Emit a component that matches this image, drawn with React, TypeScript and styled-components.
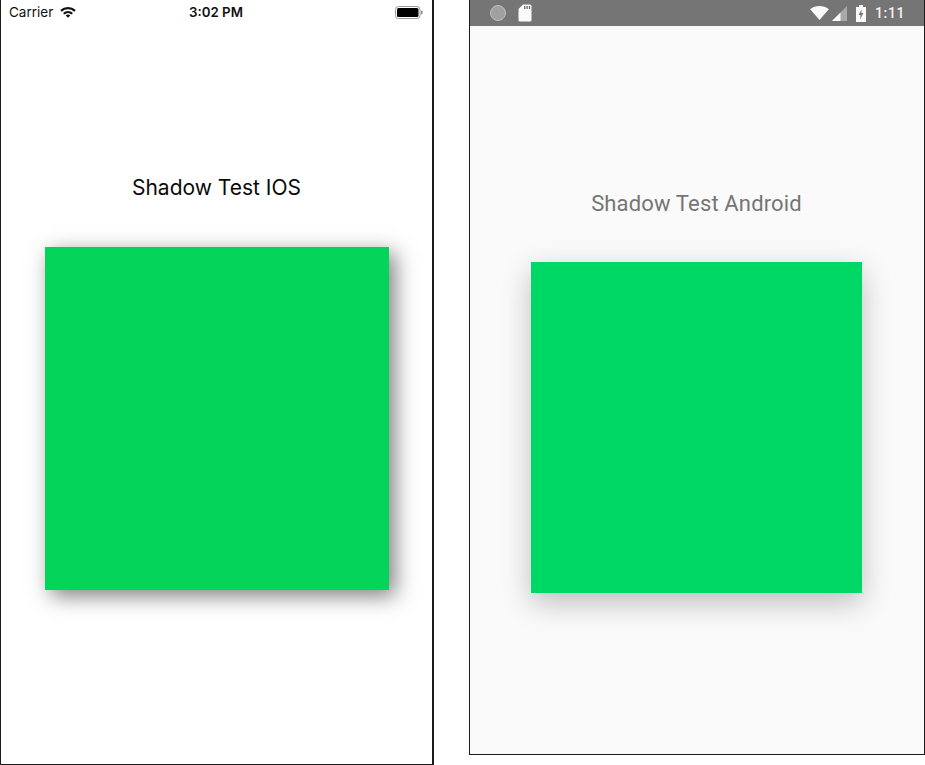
import styled, { createGlobalStyle } from 'styled-components';

const GlobalStyle = createGlobalStyle`
  html, body {
    margin: 0;
    padding: 0;
    background: #fff;
  }
`;

const Page = styled.div`
  display: flex;
  align-items: flex-start;
  gap: 35px;
  width: 925px;
  height: 765px;
  overflow: hidden;
`;

const IosFrame = styled.div`
  box-sizing: border-box;
  width: 434px;
  height: 765px;
  display: flex;
  flex-direction: column;
  align-items: center;
  background: #fff;
  border-left: 1px solid #1c1c1c;
  border-right: 2px solid #1c1c1c;
  border-bottom: 1px solid #1c1c1c;
  overflow: hidden;
`;

const IosStatusBar = styled.div`
  box-sizing: border-box;
  align-self: stretch;
  height: 24px;
  padding: 0 9px 0 8px;
  display: grid;
  grid-template-columns: 1fr auto 1fr;
  align-items: center;
  font-family: 'Inter', 'Liberation Sans', sans-serif;
  font-size: 13.5px;
  color: #111;
`;

const StatusLeft = styled.div`
  display: flex;
  align-items: center;
  gap: 7px;
  font-weight: 400;
`;

const StatusTime = styled.div`
  font-size: 13.3px;
  font-weight: 600;
`;

const StatusRight = styled.div`
  display: flex;
  justify-content: flex-end;
  align-items: center;
`;

const IosTitle = styled.div`
  margin-top: 150px;
  height: 28px;
  line-height: 28px;
  font-family: 'Inter', 'Liberation Sans', sans-serif;
  font-size: 21px;
  color: #0a0a0a;
`;

const IosSquare = styled.div`
  margin-top: 45px;
  width: 344px;
  height: 343px;
  background: #04d45a;
  box-shadow: 6px 6px 20px rgba(0, 0, 0, 0.5);
`;

const AndroidFrame = styled.div`
  box-sizing: border-box;
  width: 456px;
  height: 755px;
  display: flex;
  flex-direction: column;
  background: #fafafa;
  border-left: 1px solid #1c1c1c;
  border-right: 1px solid #1c1c1c;
  border-bottom: 1px solid #1c1c1c;
`;

const AndroidStatusBar = styled.div`
  box-sizing: border-box;
  height: 26px;
  padding: 0 19px 0 20px;
  display: flex;
  align-items: center;
  justify-content: space-between;
  background: #757575;
  color: #f2f2f2;
  font-family: 'Roboto', 'Liberation Sans', sans-serif;
  font-size: 14px;
  font-weight: 500;
  letter-spacing: 0.6px;
`;

const AndroidBody = styled.div`
  display: flex;
  flex-direction: column;
  align-items: center;
  padding-right: 1px;
`;

const StatusGroup = styled.div`
  display: flex;
  align-items: center;
  gap: ${(props: { $gap: number }) => props.$gap}px;
`;

const RecordDot = styled.div`
  width: 16px;
  height: 16px;
  border-radius: 50%;
  background: #a0a0a0;
  border: 1px solid #c0c0c0;
  box-sizing: border-box;
`;

const SignalGroup = styled.div`
  display: flex;
  align-items: center;
  gap: 3px;
  margin-right: 9px;
`;

const BatteryTime = styled.div`
  display: flex;
  align-items: center;
  gap: 9px;
`;

const AndroidTitle = styled.div`
  margin-top: 164px;
  height: 28px;
  line-height: 28px;
  font-family: 'Roboto', 'Liberation Sans', sans-serif;
  font-size: 22px;
  letter-spacing: 0.15px;
  color: #757575;
`;

const AndroidSquare = styled.div`
  margin-top: 44px;
  width: 331px;
  height: 331px;
  background: #00d865;
  box-shadow: 0 10px 28px rgba(0, 0, 0, 0.24);
`;

const WifiIcon = () => (
  <svg width="16" height="12" viewBox="0 0 16 12">
    <path d="M0.2 4 A11.4 11.4 0 0 1 15.8 4 L14.2 5.8 A9 9 0 0 0 1.8 5.8 Z" fill="#111" />
    <path d="M3 6.9 A7.2 7.2 0 0 1 13 6.9 L11.4 8.5 A5 5 0 0 0 4.6 8.5 Z" fill="#111" />
    <path d="M5.7 9.5 A3.4 3.4 0 0 1 10.3 9.5 L8 11.8 Z" fill="#111" />
  </svg>
);

const IosBattery = () => (
  <svg width="28" height="13" viewBox="0 0 28 13">
    <rect x="0.5" y="0.5" width="24.5" height="12" rx="3" fill="none" stroke="#9a9a9a" />
    <rect x="2" y="2" width="21.5" height="9" rx="1.5" fill="#000" />
    <rect x="26" y="4.5" width="1.5" height="4" rx="0.7" fill="#8a8a8a" />
  </svg>
);

const SdCardIcon = () => (
  <svg width="14" height="18" viewBox="0 0 14 18">
    <path d="M5 0.5 H12 A1.5 1.5 0 0 1 13.5 2 V16 A1.5 1.5 0 0 1 12 17.5 H2 A1.5 1.5 0 0 1 0.5 16 V5 Z" fill="#fafafa" />
    <rect x="6" y="2" width="1.4" height="3" fill="#757575" />
    <rect x="8.4" y="2" width="1.4" height="3" fill="#757575" />
    <rect x="10.8" y="2" width="1.4" height="3" fill="#757575" />
  </svg>
);

const AndroidWifi = () => (
  <svg width="19" height="14" viewBox="0 0 20 15">
    <path d="M0 3.5 C5.5 -1 14.5 -1 20 3.5 L10 15 Z" fill="#fafafa" />
  </svg>
);

const CellIcon = () => (
  <svg width="15" height="15" viewBox="0 0 15 15">
    <path d="M15 0 V15 H0 Z" fill="#a8a8a8" />
    <path d="M8.5 6.5 V15 H0 Z" fill="#fafafa" />
  </svg>
);

const ChargingBattery = () => (
  <svg width="10" height="17" viewBox="0 0 10 17">
    <path d="M3 0 H7 V2 H10 V17 H0 V2 H3 Z" fill="#fafafa" />
    <path d="M5.6 4 L2.6 10 H4.6 L4 14.5 L7.4 8 H5.3 Z" fill="#757575" />
  </svg>
);

function App() {
  return (
    <Page>
      <GlobalStyle />
      <IosFrame>
        <IosStatusBar>
          <StatusLeft>
            Carrier
            <WifiIcon />
          </StatusLeft>
          <StatusTime>3:02 PM</StatusTime>
          <StatusRight>
            <IosBattery />
          </StatusRight>
        </IosStatusBar>
        <IosTitle>Shadow Test IOS</IosTitle>
        <IosSquare />
      </IosFrame>
      <AndroidFrame>
        <AndroidStatusBar>
          <StatusGroup $gap={12}>
            <RecordDot />
            <SdCardIcon />
          </StatusGroup>
          <StatusGroup $gap={0}>
            <SignalGroup>
              <AndroidWifi />
              <CellIcon />
            </SignalGroup>
            <BatteryTime>
              <ChargingBattery />
              <span>1:11</span>
            </BatteryTime>
          </StatusGroup>
        </AndroidStatusBar>
        <AndroidBody>
          <AndroidTitle>Shadow Test Android</AndroidTitle>
          <AndroidSquare />
        </AndroidBody>
      </AndroidFrame>
    </Page>
  );
}

export default App;
